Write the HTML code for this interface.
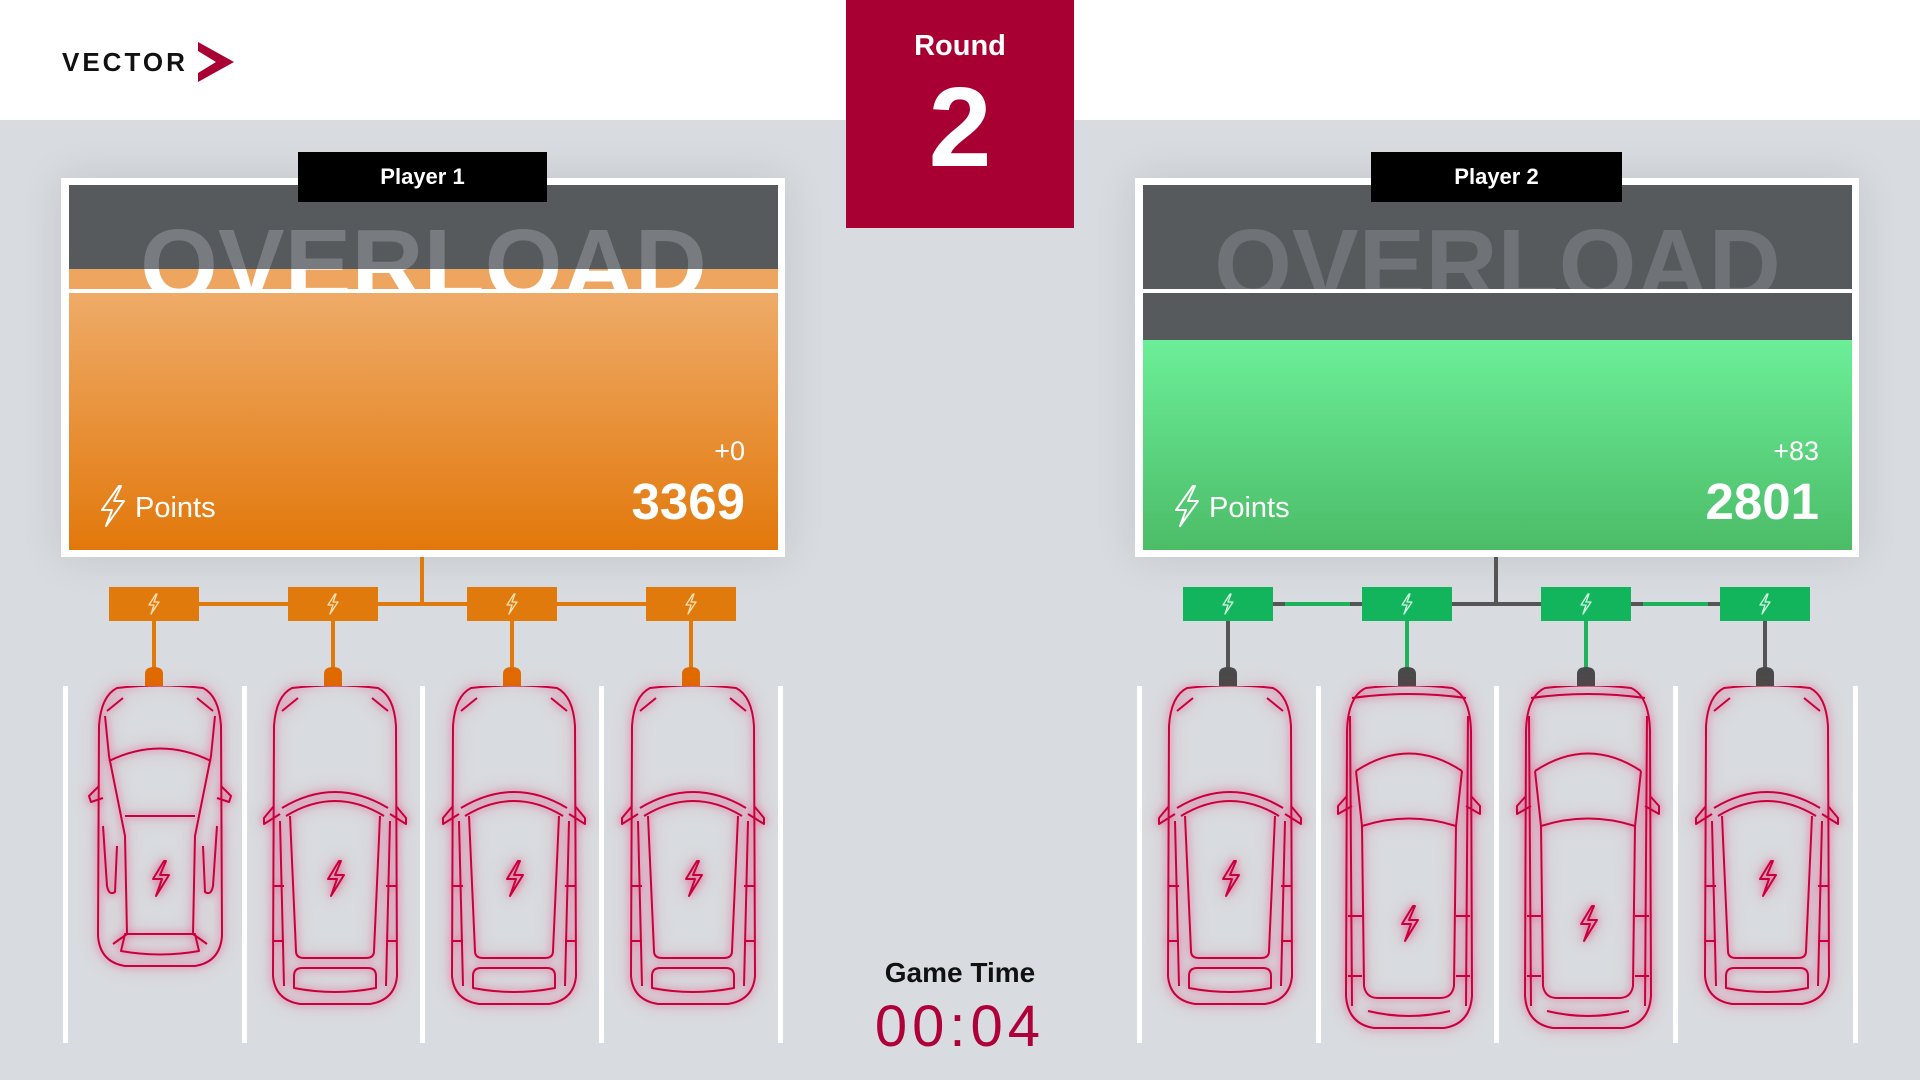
<!DOCTYPE html>
<html><head><meta charset="utf-8"><style>
*{margin:0;padding:0;box-sizing:border-box}
body{width:1920px;height:1080px;background:#d8dbdf;position:relative;overflow:hidden;font-family:"Liberation Sans",sans-serif}
.abs{position:absolute}
.hdr{left:0;top:0;width:1920px;height:120px;background:#fff}
.round{left:846px;top:0;width:228px;height:228px;background:#a80032;color:#fff;text-align:center}
.frame{background:#fff;box-shadow:0 0 40px rgba(0,0,0,0.10)}
.label{background:#000;color:#fff;font-weight:bold;font-size:22px;text-align:center;line-height:50px}
.ov{font-weight:bold;font-size:100px;letter-spacing:0px;line-height:1;white-space:nowrap;width:709px;text-align:center}
.clip{overflow:hidden}
.lane{width:5px;top:686px;height:357px;background:#fff}
.car{filter:drop-shadow(0 0 4px rgba(230,0,80,0.6)) drop-shadow(0 0 8px rgba(230,0,80,0.3))}
</style></head><body>
<div class="abs hdr"></div>
<div class="abs" style="left:62px;top:47px;font-weight:bold;font-size:26px;letter-spacing:3px;color:#111">VECTOR</div>
<svg class="abs" style="left:198px;top:42px" width="38" height="40" viewBox="0 0 38 40"><path d="M0,0 L36,20 L0,40 L0,31 L18,20 L0,9 Z" fill="#a80032"/></svg>
<div class="abs round"><div style="font-weight:bold;font-size:29px;margin-top:30px">Round</div><div style="font-weight:bold;font-size:113px;line-height:1;margin-top:8px">2</div></div>

<div class="abs frame" style="left:61px;top:178px;width:724px;height:379px"></div>
<div class="abs" style="left:69px;top:185px;width:709px;height:84px;background:#565a5d"></div>
<div class="abs" style="left:69px;top:269px;width:709px;height:20px;background:#eda55f"></div>
<div class="abs" style="left:69px;top:293px;width:709px;height:257px;background:linear-gradient(#eeab68,#e2780b)"></div>
<div class="abs clip" style="left:69px;top:185px;width:709px;height:84px"><div class="abs ov" style="left:0;top:30px;color:#787c80">OVERLOAD</div></div>
<div class="abs clip" style="left:69px;top:269px;width:709px;height:20px"><div class="abs ov" style="left:0;top:-54px;color:#fff">OVERLOAD</div></div>
<div class="abs label" style="left:298px;top:152px;width:249px;height:50px">Player 1</div>
<svg class="abs" style="left:99px;top:484px" width="28" height="44" viewBox="0 0 28 44"><path d="M20,2 L3,26 L13,26 L7,42 L25,17 L15,17 L22,2 Z" fill="none" stroke="#fff" stroke-width="2" stroke-linejoin="round"/></svg>
<div class="abs" style="left:135px;top:492px;font-size:29px;color:#fff">Points</div>
<div class="abs" style="right:1175px;top:436px;font-size:27px;color:#fff">+0</div>
<div class="abs" style="right:1175px;top:472px;font-size:51px;font-weight:bold;color:#fff">3369</div>

<div class="abs frame" style="left:1135px;top:178px;width:724px;height:379px"></div>
<div class="abs" style="left:1143px;top:185px;width:709px;height:155px;background:#565a5d"></div>
<div class="abs" style="left:1143px;top:289px;width:709px;height:4px;background:#fff"></div>
<div class="abs" style="left:1143px;top:340px;width:709px;height:210px;background:linear-gradient(#6cee98,#4cbc68)"></div>
<div class="abs clip" style="left:1143px;top:185px;width:709px;height:104px"><div class="abs ov" style="left:0;top:30px;color:#6f7377">OVERLOAD</div></div>
<div class="abs label" style="left:1371px;top:152px;width:251px;height:50px">Player 2</div>
<svg class="abs" style="left:1173px;top:484px" width="28" height="44" viewBox="0 0 28 44"><path d="M20,2 L3,26 L13,26 L7,42 L25,17 L15,17 L22,2 Z" fill="none" stroke="#fff" stroke-width="2" stroke-linejoin="round"/></svg>
<div class="abs" style="left:1209px;top:492px;font-size:29px;color:#fff">Points</div>
<div class="abs" style="right:101px;top:436px;font-size:27px;color:#fff">+83</div>
<div class="abs" style="right:101px;top:472px;font-size:51px;font-weight:bold;color:#fff">2801</div>

<svg class="abs" style="left:0;top:550px" width="1920" height="140" viewBox="0 550 1920 140">
<defs>
<symbol id="bolt" viewBox="0 0 14 22"><path d="M9,1 L2,12 L7,12 L4,21 L12,9 L7,9 L10,1 Z" fill="none" stroke-width="1.3" stroke-linejoin="round"/></symbol>
</defs>
<g fill="#e07a0c">
<rect x="420" y="557" width="4" height="47"/>
<rect x="154" y="602" width="537" height="4"/>
<rect x="152" y="621" width="4" height="50"/><rect x="331" y="621" width="4" height="50"/><rect x="510" y="621" width="4" height="50"/><rect x="689" y="621" width="4" height="50"/>
</g>
<g fill="#e06a00">
<path d="M145,686 L145,674 Q145,667 154,667 Q163,667 163,674 L163,686 Z"/>
<path d="M324,686 L324,674 Q324,667 333,667 Q342,667 342,674 L342,686 Z"/>
<path d="M503,686 L503,674 Q503,667 512,667 Q521,667 521,674 L521,686 Z"/>
<path d="M682,686 L682,674 Q682,667 691,667 Q700,667 700,674 L700,686 Z"/>
</g>
<g fill="#e07a0c">
<rect x="109" y="587" width="90" height="34"/><rect x="288" y="587" width="90" height="34"/><rect x="467" y="587" width="90" height="34"/><rect x="646" y="587" width="90" height="34"/>
</g>
<g stroke="#ffe3b8">
<use href="#bolt" x="147" y="593" width="14" height="22"/><use href="#bolt" x="326" y="593" width="14" height="22"/><use href="#bolt" x="505" y="593" width="14" height="22"/><use href="#bolt" x="684" y="593" width="14" height="22"/>
</g>
<rect x="1494" y="557" width="4" height="47" fill="#555"/>
<rect x="1228" y="602" width="537" height="4" fill="#555"/>
<rect x="1285" y="602" width="65" height="4" fill="#1db35a"/>
<rect x="1643" y="602" width="65" height="4" fill="#1db35a"/>
<rect x="1226" y="621" width="4" height="50" fill="#555"/>
<rect x="1405" y="621" width="4" height="50" fill="#1db35a"/>
<rect x="1584" y="621" width="4" height="50" fill="#1db35a"/>
<rect x="1763" y="621" width="4" height="50" fill="#555"/>
<g fill="#4a4a4a">
<path d="M1219,686 L1219,674 Q1219,667 1228,667 Q1237,667 1237,674 L1237,686 Z"/>
<path d="M1398,686 L1398,674 Q1398,667 1407,667 Q1416,667 1416,674 L1416,686 Z"/>
<path d="M1577,686 L1577,674 Q1577,667 1586,667 Q1595,667 1595,674 L1595,686 Z"/>
<path d="M1756,686 L1756,674 Q1756,667 1765,667 Q1774,667 1774,674 L1774,686 Z"/>
</g>
<g fill="#12b55c">
<rect x="1183" y="587" width="90" height="34"/><rect x="1362" y="587" width="90" height="34"/><rect x="1541" y="587" width="90" height="34"/><rect x="1720" y="587" width="90" height="34"/>
</g>
<g stroke="#d8ffe6">
<use href="#bolt" x="1221" y="593" width="14" height="22"/><use href="#bolt" x="1400" y="593" width="14" height="22"/><use href="#bolt" x="1579" y="593" width="14" height="22"/><use href="#bolt" x="1758" y="593" width="14" height="22"/>
</g>
</svg>

<div class="abs lane" style="left:63px"></div><div class="abs lane" style="left:242px"></div><div class="abs lane" style="left:420px"></div><div class="abs lane" style="left:599px"></div><div class="abs lane" style="left:778px"></div>
<div class="abs lane" style="left:1137px"></div><div class="abs lane" style="left:1316px"></div><div class="abs lane" style="left:1494px"></div><div class="abs lane" style="left:1673px"></div><div class="abs lane" style="left:1853px"></div>

<svg width="0" height="0" style="position:absolute">
<defs>
<symbol id="carA" viewBox="-10 0 150 282"><g fill="none" stroke="#c8003c" stroke-width="2" stroke-linejoin="round">
<path d="M22,2 Q65,-3 108,2 Q124,10 126,40 L127,250 Q125,276 100,280 L30,280 Q5,276 3,250 L4,40 Q6,10 22,2 Z"/>
<path d="M12,25 L28,12 M118,25 L102,12"/>
<path d="M10,30 L14,70 L30,150 L32,248 L18,258 M120,30 L116,70 L100,150 L98,248 L112,258"/>
<path d="M14,75 Q65,50 116,75"/>
<path d="M30,130 L100,130"/>
<path d="M4,100 L-6,110 L-4,116 L8,112 M126,100 L136,110 L134,116 L122,112"/>
<path d="M8,140 L12,200 Q14,210 20,206 L22,160 M122,140 L118,200 Q116,210 110,206 L108,160"/>
<path d="M30,248 L100,248 L104,265 Q65,272 26,265 Z"/>
<path d="M69,175 L58,193 L67,193 L61,210 L74,189 L65,189 L71,175 Z"/>
</g></symbol>
<symbol id="carB" viewBox="-10 0 150 320"><g fill="none" stroke="#c8003c" stroke-width="2" stroke-linejoin="round">
<path d="M22,2 Q65,-3 108,2 Q124,10 126,40 L127,290 Q125,314 100,318 L30,318 Q5,314 3,290 L4,40 Q6,10 22,2 Z"/>
<path d="M12,25 L28,12 M118,25 L102,12"/>
<path d="M4,120 L-6,132 L-6,138 L10,128 M126,120 L136,132 L136,138 L120,128"/>
<path d="M12,122 Q65,90 118,122 M16,130 Q65,100 114,130"/>
<path d="M20,130 L26,265 Q26,272 34,272 L96,272 Q104,272 104,265 L110,130"/>
<path d="M10,135 L14,300 M120,135 L116,300 M4,200 L14,200 M126,200 L116,200 M4,255 L14,255 M126,255 L116,255"/>
<path d="M24,290 Q24,282 32,282 L98,282 Q106,282 106,290 L106,302 Q65,310 24,302 Z"/>
<path d="M69,175 L58,193 L67,193 L61,210 L74,189 L65,189 L71,175 Z"/>
</g></symbol>
<symbol id="carC" viewBox="-10 0 150 344"><g fill="none" stroke="#c8003c" stroke-width="2" stroke-linejoin="round">
<path d="M22,2 Q65,-3 108,2 Q126,10 127,45 L128,310 Q126,338 100,342 L30,342 Q4,338 2,310 L3,45 Q4,10 22,2 Z"/>
<path d="M8,12 Q65,4 122,12 M6,30 L8,320 M124,30 L122,320"/>
<path d="M3,110 L-6,120 L-6,128 L8,120 M127,110 L136,120 L136,128 L122,120"/>
<path d="M12,85 Q65,50 118,85"/>
<path d="M18,140 Q65,125 112,140"/>
<path d="M12,85 L18,140 L20,300 Q22,312 34,312 L96,312 Q108,312 110,300 L112,140 L118,85"/>
<path d="M4,230 L18,230 M126,230 L112,230 M4,290 L18,290 M126,290 L112,290"/>
<path d="M24,325 Q65,335 106,325"/>
<path d="M69,220 L58,238 L67,238 L61,255 L74,234 L65,234 L71,220 Z"/>
</g></symbol>
</defs></svg>

<svg class="abs car" style="left:85px;top:686px" width="150" height="282"><use href="#carA" width="150" height="282"/></svg>
<svg class="abs car" style="left:260px;top:686px" width="150" height="320"><use href="#carB" width="150" height="320"/></svg>
<svg class="abs car" style="left:439px;top:686px" width="150" height="320"><use href="#carB" width="150" height="320"/></svg>
<svg class="abs car" style="left:618px;top:686px" width="150" height="320"><use href="#carB" width="150" height="320"/></svg>
<svg class="abs car" style="left:1155px;top:686px" width="150" height="320"><use href="#carB" width="150" height="320"/></svg>
<svg class="abs car" style="left:1334px;top:686px" width="150" height="344"><use href="#carC" width="150" height="344"/></svg>
<svg class="abs car" style="left:1513px;top:686px" width="150" height="344"><use href="#carC" width="150" height="344"/></svg>
<svg class="abs car" style="left:1692px;top:686px" width="150" height="320"><use href="#carB" width="150" height="320"/></svg>

<div class="abs" style="left:760px;width:400px;top:957px;text-align:center;font-weight:bold;font-size:28px;color:#111">Game Time</div>
<div class="abs" style="left:760px;width:400px;top:993px;text-align:center;font-size:58px;letter-spacing:5px;color:#b0003a">00:04</div>
</body></html>
